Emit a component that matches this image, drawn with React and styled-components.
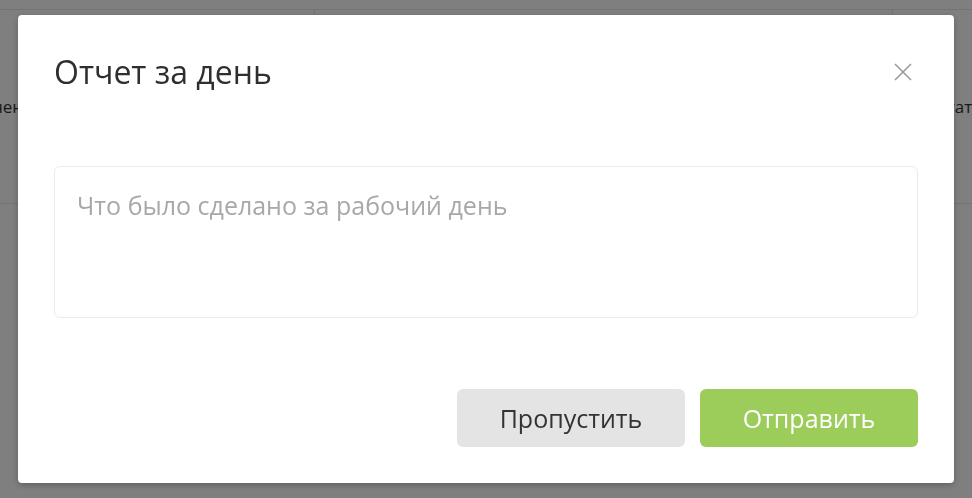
import React from 'react';
import styled, { createGlobalStyle } from 'styled-components';

const GlobalStyle = createGlobalStyle`
  html, body {
    margin: 0;
    padding: 0;
    background: #fff;
    font-family: 'Open Sans', 'Liberation Sans', sans-serif;
    overflow: hidden;
  }
`;

const Page = styled.div`
  width: 972px;
  height: 498px;
  overflow: hidden;
  position: relative;
`;

const Table = styled.div`
  display: grid;
  grid-template-columns: 395px 578px 120px;
  margin-left: -80px;
  border-top: 1px solid #e6e6e6;
  margin-top: 9px;
`;

const Cell = styled.div`
  height: 193px;
  display: flex;
  align-items: center;
  padding-left: ${({ $pad }) => $pad}px;
  border-right: 1px solid #e6e6e6;
  border-bottom: 1px solid #e6e6e6;
  font-size: 17px;
  color: #333;
  white-space: nowrap;
`;

const Overlay = styled.div`
  position: fixed;
  inset: 0;
  background: rgba(0, 0, 0, 0.5);
  display: flex;
  align-items: center;
  justify-content: center;
`;

const Modal = styled.div`
  width: 936px;
  height: 468px;
  box-sizing: border-box;
  padding: 36px;
  background: #fff;
  border-radius: 4px;
  box-shadow: 0 2px 6px rgba(0, 0, 0, 0.25);
  display: flex;
  flex-direction: column;
`;

const Header = styled.div`
  height: 42px;
  display: flex;
  align-items: center;
  justify-content: space-between;
`;

const Title = styled.h2`
  margin: 0;
  font-size: 32px;
  line-height: 42px;
  font-weight: 400;
  color: #2f2f2f;
`;

const CloseButton = styled.button`
  width: 30px;
  height: 30px;
  padding: 0;
  border: none;
  background: none;
  display: flex;
  align-items: center;
  justify-content: center;
  cursor: pointer;
`;

const TextArea = styled.textarea`
  margin-top: 73px;
  height: 152px;
  box-sizing: border-box;
  width: 100%;
  resize: none;
  border: 1px solid #ebebeb;
  border-radius: 6px;
  padding: 20px 22px;
  font-family: inherit;
  font-size: 25px;
  line-height: 36px;
  color: #333;
  outline: none;

  &::placeholder {
    color: #a8a8a8;
  }
`;

const Footer = styled.div`
  margin-top: auto;
  display: flex;
  justify-content: flex-end;
  gap: 15px;
`;

const Button = styled.button`
  width: ${({ $w }) => $w}px;
  height: 58px;
  border: none;
  border-radius: 6px;
  font-family: inherit;
  font-size: 25px;
  background: ${({ $primary }) => ($primary ? '#9ccc59' : '#e4e4e4')};
  color: ${({ $primary }) => ($primary ? '#fff' : '#333')};
  cursor: pointer;
`;

function CloseIcon() {
  return (
    <svg width="18" height="18" viewBox="0 0 18 18">
      <path d="M1 1L17 17M17 1L1 17" stroke="#9a9a9a" strokeWidth="1.6" fill="none" />
    </svg>
  );
}

export default function App() {
  return (
    <Page>
      <GlobalStyle />
      <Table>
        <Cell $pad={22}>Назначен</Cell>
        <Cell $pad={20}>Описание задачи</Cell>
        <Cell $pad={43}>Статус</Cell>
      </Table>
      <Overlay>
        <Modal>
          <Header>
            <Title>Отчет за день</Title>
            <CloseButton aria-label="Закрыть">
              <CloseIcon />
            </CloseButton>
          </Header>
          <TextArea placeholder="Что было сделано за рабочий день" />
          <Footer>
            <Button $w={228}>Пропустить</Button>
            <Button $w={218} $primary>
              Отправить
            </Button>
          </Footer>
        </Modal>
      </Overlay>
    </Page>
  );
}
